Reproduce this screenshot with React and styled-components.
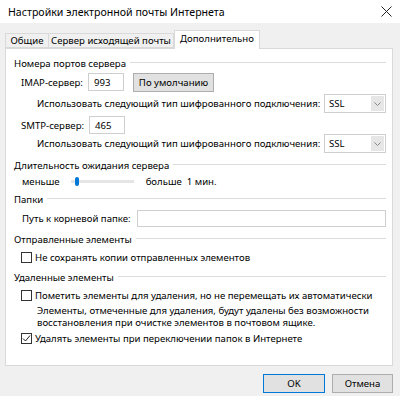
import React from 'react';
import styled, { createGlobalStyle } from 'styled-components';

const GlobalStyle = createGlobalStyle`
  html, body { margin: 0; padding: 0; background: #f0f0f0; }
  body { font-family: "Noto Sans", "Open Sans", sans-serif; font-size: 9.6px; color: #000; }
`;

const Window = styled.div`
  width: 400px;
  height: 396px;
  display: flex;
  flex-direction: column;
  background: #f0f0f0;
  overflow: hidden;
`;

const TitleBar = styled.div`
  height: 23px;
  background: #fff;
  display: flex;
  align-items: center;
  justify-content: space-between;
  padding: 0 8px;
`;

const Title = styled.div`
  font-size: 10.6px;
  color: #000;
`;

const Body = styled.div`
  padding: 6px 7px 0 5px;
  display: flex;
  flex-direction: column;
`;

const Tabs = styled.div`
  display: flex;
  align-items: flex-end;
  height: 19px;
  position: relative;
  z-index: 1;
`;

const Tab = styled.div`
  height: ${p => (p.$active ? '19px' : '15px')};
  width: ${p => p.$w}px;
  box-sizing: border-box;
  display: flex;
  align-items: center;
  justify-content: center;
  padding-bottom: ${p => (p.$active ? '3px' : '0')};
  border: 1px solid #d9d9d9;
  border-bottom: ${p => (p.$active ? 'none' : '1px solid #d9d9d9')};
  border-left: ${p => (p.$first || p.$active ? '1px solid #d9d9d9' : 'none')};
  background: ${p => (p.$active ? '#fff' : '#f0f0f0')};
  margin-bottom: ${p => (p.$active ? '-1px' : '0')};
  white-space: nowrap;
`;

const Panel = styled.div`
  height: 318px;
  box-sizing: border-box;
  background: #fff;
  border: 1px solid #d9d9d9;
  padding: 8px 6px 0 8px;
  display: flex;
  flex-direction: column;
`;

const SectionHead = styled.div`
  height: 12px;
  margin-top: ${p => p.$mt || 0}px;
  display: flex;
  align-items: center;
  white-space: nowrap;
  &::after {
    content: "";
    flex: 1;
    border-top: 1px solid #dcdcdc;
    margin-left: 4px;
    margin-top: -1px;
  }
`;

const Row = styled.div`
  height: ${p => p.$h}px;
  margin-top: ${p => p.$mt || 0}px;
  padding-left: ${p => p.$indent || 0}px;
  display: flex;
  align-items: center;
  white-space: nowrap;
`;

const Label = styled.span`
  width: ${p => p.$w}px;
  flex: none;
`;

const Input = styled.div`
  width: ${p => p.$w}px;
  flex: ${p => (p.$grow ? 1 : 'none')};
  height: ${p => p.$h || 18}px;
  box-sizing: border-box;
  border: 1px solid #cfcfcf;
  background: #fff;
  display: flex;
  align-items: center;
  padding-left: 5px;
`;

const Button = styled.div`
  width: ${p => p.$w}px;
  height: ${p => p.$h || 19}px;
  box-sizing: border-box;
  background: #e1e1e1;
  border: 1px solid ${p => (p.$primary ? '#0078d7' : '#adadad')};
  display: flex;
  align-items: center;
  justify-content: center;
  margin-left: ${p => p.$ml || 0}px;
`;

const Select = styled.div`
  margin-left: auto;
  width: 62px;
  height: 19px;
  box-sizing: border-box;
  border: 1px solid #cfcfcf;
  display: flex;
  align-items: center;
`;

const SelectValue = styled.span`
  flex: 1;
  padding-left: 4px;
`;

const Arrow = styled.div`
  width: 13px;
  height: 15px;
  margin-right: 1px;
  background: #e6e6e6;
  display: flex;
  align-items: center;
  justify-content: center;
`;

const Track = styled.div`
  width: 63px;
  height: 3px;
  background: #e5e5e5;
  margin: 0 12px 0 ${p => p.$ml}px;
  position: relative;
`;

const Thumb = styled.div`
  position: absolute;
  left: 4px;
  top: -3px;
  width: 4px;
  height: 9px;
  border-radius: 2px;
  background: #0078d7;
`;

const Box = styled.div`
  width: 11px;
  height: 11px;
  box-sizing: border-box;
  border: 1px solid #333;
  background: #fff;
  margin-right: 3px;
  display: flex;
  align-items: center;
  justify-content: center;
`;

const Note = styled.div`
  padding-left: 23px;
  margin-top: ${p => p.$mt || 0}px;
  line-height: 12px;
  white-space: nowrap;
`;

const Footer = styled.div`
  display: flex;
  justify-content: flex-end;
  padding: 8px 7px 0 0;
`;

const Chevron = () => (
  <svg width="7" height="4" viewBox="0 0 7 4">
    <path d="M0.5 0.5 L3.5 3.5 L6.5 0.5" fill="none" stroke="#8a8a8a" strokeWidth="1" />
  </svg>
);

const Check = ({ checked }) => (
  <Box>
    {checked && (
      <svg width="9" height="9" viewBox="0 0 9 9">
        <path d="M1 4.5 L3.5 7 L8 1.5" fill="none" stroke="#222" strokeWidth="1" />
      </svg>
    )}
  </Box>
);

const CloseIcon = () => (
  <svg width="11" height="11" viewBox="0 0 11 11">
    <path d="M0.5 0.5 L10.5 10.5 M10.5 0.5 L0.5 10.5" stroke="#222" strokeWidth="1" />
  </svg>
);

export default function App() {
  return (
    <Window>
      <GlobalStyle />
      <TitleBar>
        <Title>Настройки электронной почты Интернета</Title>
        <CloseIcon />
      </TitleBar>
      <Body>
        <Tabs>
          <Tab $w={44} $first>Общие</Tab>
          <Tab $w={125}>Сервер исходящей почты</Tab>
          <Tab $w={86} $active>Дополнительно</Tab>
        </Tabs>
        <Panel>
          <SectionHead>Номера портов сервера</SectionHead>
          <Row $h={18} $mt={4} $indent={7}>
            <Label $w={67}>IMAP-сервер:</Label>
            <Input $w={36}>993</Input>
            <Button $w={81} $h={19} $ml={9}>По умолчанию</Button>
          </Row>
          <Row $h={19} $mt={3} $indent={23}>
            Использовать следующий тип шифрованного подключения:
            <Select>
              <SelectValue>SSL</SelectValue>
              <Arrow><Chevron /></Arrow>
            </Select>
          </Row>
          <Row $h={18} $mt={3} $indent={7}>
            <Label $w={68}>SMTP-сервер:</Label>
            <Input $w={36}>465</Input>
          </Row>
          <Row $h={19} $mt={0} $indent={23}>
            Использовать следующий тип шифрованного подключения:
            <Select>
              <SelectValue>SSL</SelectValue>
              <Arrow><Chevron /></Arrow>
            </Select>
          </Row>
          <SectionHead $mt={6}>Длительность ожидания сервера</SectionHead>
          <Row $h={12} $mt={4} $indent={8}>
            меньше
            <Track $ml={11}><Thumb /></Track>
            больше&nbsp;&nbsp;1 мин.
          </Row>
          <SectionHead $mt={6}>Папки</SectionHead>
          <Row $h={18} $mt={4} $indent={8}>
            <Label $w={115}>Путь к корневой папке:</Label>
            <Input $grow $h={17} />
          </Row>
          <SectionHead $mt={6}>Отправленные элементы</SectionHead>
          <Row $h={13} $mt={6} $indent={7}>
            <Check />
            Не сохранять копии отправленных элементов
          </Row>
          <SectionHead $mt={7}>Удаленные элементы</SectionHead>
          <Row $h={13} $mt={6} $indent={7}>
            <Check />
            Пометить элементы для удаления, но не перемещать их автоматически
          </Row>
          <Note $mt={3}>
            Элементы, отмеченные для удаления, будут удалены без возможности
            <br />
            восстановления при очистке элементов в почтовом ящике.
          </Note>
          <Row $h={13} $mt={3} $indent={7}>
            <Check checked />
            Удалять элементы при переключении папок в Интернете
          </Row>
        </Panel>
      </Body>
      <Footer>
        <Button $w={62} $primary>OK</Button>
        <Button $w={61} $ml={7}>Отмена</Button>
      </Footer>
    </Window>
  );
}
